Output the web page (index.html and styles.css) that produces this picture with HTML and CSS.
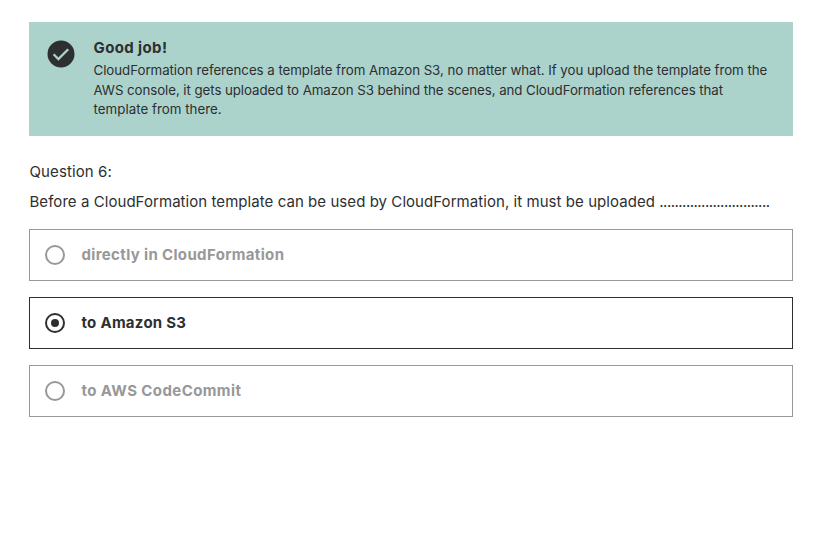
FILE: index.html
```html
<!DOCTYPE html>
<html lang="en">
<head>
<meta charset="utf-8">
<title>Quiz</title>
<link rel="stylesheet" href="styles.css">
</head>
<body>
<main class="quiz">
  <section class="alert">
    <svg class="alert-icon" viewBox="0 0 28 28"><circle cx="14" cy="14" r="13.5" fill="#2d2f31"/><path d="M6.6 14.2l4.8 4.8 9.8-9.8" fill="none" stroke="#acd2cc" stroke-width="2.3"/></svg>
    <div class="alert-body">
      <h2 class="alert-title">Good job!</h2>
      <p class="alert-text"><span class="line line-first">CloudFormation references a template from Amazon S3, no matter what. If you upload the template from the </span><span class="line line-second">AWS console, it gets uploaded to Amazon S3 behind the scenes, and CloudFormation references that </span><span class="line line-third">template from there.</span></p>
    </div>
  </section>
  <p class="number">Question 6:</p>
  <p class="prompt">Before a CloudFormation template can be used by CloudFormation, it must be uploaded <span class="dots">.............................</span></p>
  <ul class="answers">
    <li class="answer"><span class="radio"></span><span class="label">directly in CloudFormation</span></li>
    <li class="answer selected"><span class="radio"></span><span class="label">to Amazon S3</span></li>
    <li class="answer"><span class="radio"></span><span class="label wide">to AWS CodeCommit</span></li>
  </ul>
</main>
</body>
</html>
```
FILE: styles.css
```css
* { box-sizing: border-box; margin: 0; padding: 0; }
body { background: #fff; color: #2d2f31; font-family: Inter, "Liberation Sans", sans-serif; }
.quiz { padding: 22px 31px 0 29px; }
.alert { display: flex; height: 114px; padding: 16px 18px; background: #acd2cc; }
.alert-icon { width: 28px; height: 28px; margin: 2px 18.5px 0 0; flex: none; }
.alert-body { white-space: nowrap; }
.alert-title { font-size: 15px; line-height: 20px; font-weight: 700; letter-spacing: 0.38px; }
.alert-text { font-size: 13.3px; line-height: 19px; margin-top: 3px; }
.line { display: block; }
.line-first { height: 20px; letter-spacing: -0.047px; }
.line-second { letter-spacing: -0.069px; }
.line-third { letter-spacing: 0.03px; }
.number { margin-top: 25px; padding-left: 0.5px; font-size: 15px; line-height: 22px; letter-spacing: 0.1px; }
.prompt { margin-top: 8px; padding-left: 0.5px; font-size: 15px; line-height: 22px; letter-spacing: 0.058px; white-space: nowrap; }
.dots { letter-spacing: -0.52px; }
.answers { list-style: none; margin-top: 16px; display: grid; gap: 16px; }
.answer { display: flex; align-items: center; height: 52px; border: 1px solid #989898; padding-left: 15px; gap: 16.5px; color: #989898; font-size: 15px; font-weight: 700; letter-spacing: 0.35px; }
.label { padding-bottom: 2px; }
.wide { letter-spacing: 0.4px; }
.radio { width: 20px; height: 20px; border: 2px solid #989898; border-radius: 50%; display: grid; place-items: center; }
.selected { border-color: #2d2f31; color: #2d2f31; letter-spacing: 0.27px; }
.selected .radio { border-color: #2d2f31; }
.selected .radio::after { content: ""; width: 8px; height: 8px; border-radius: 50%; background: #2d2f31; }
```
